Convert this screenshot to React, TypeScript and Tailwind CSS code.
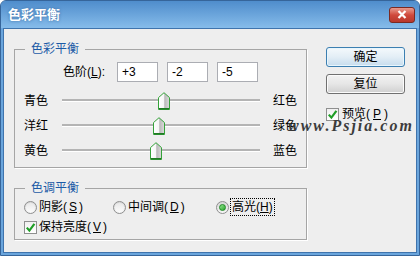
import React from 'react'

const sliders = [
  { left: '青色', right: '红色', value: 3 },
  { left: '洋红', right: '绿色', value: -2 },
  { left: '黄色', right: '蓝色', value: -5 },
]

const Thumb = () => (
  <svg width="12" height="18" viewBox="0 0 12 18">
    <defs>
      <linearGradient id="thumbFill" x1="0" x2="1" y1="0" y2="0">
        <stop offset="0" stopColor="#ffffff" />
        <stop offset="0.5" stopColor="#f6f6f6" />
        <stop offset="0.56" stopColor="#b9b9b9" />
        <stop offset="1" stopColor="#dcdcdc" />
      </linearGradient>
    </defs>
    <path d="M6 0.7 L11.5 5.6 V17.5 H0.5 V5.6 Z" fill="url(#thumbFill)" stroke="#35a23a" strokeWidth="1" />
    <path d="M1 16.8 H11" stroke="#1f7a22" strokeWidth="1.4" />
  </svg>
)

const Check = () => (
  <span className="flex h-[13px] w-[13px] items-center justify-center border border-[#8e8f8f] bg-linear-to-b from-[#f0f0f0] to-white">
    <svg width="11" height="11" viewBox="0 0 11 11">
      <path d="M1.8 5.6 L4.4 8.6 L9.4 1.8" fill="none" stroke="#1f9e26" strokeWidth="2.2" />
    </svg>
  </span>
)

const Radio = ({ checked }: { checked?: boolean }) => (
  <span className="flex h-[13px] w-[13px] items-center justify-center rounded-full border border-[#8e8f8f] bg-linear-to-b from-[#d6d6d6] to-[#f7f7f7]">
    {checked ? (
      <span className="h-[7px] w-[7px] rounded-full border border-[#1d8a22] bg-linear-to-br from-[#8ee58c] to-[#24a52b]" />
    ) : (
      <span className="h-[9px] w-[9px] rounded-full bg-linear-to-b from-[#e8e8e8] to-[#fbfbfb]" />
    )}
  </span>
)

const Key = ({ k }: { k: string }) => (
  <>
    (<u className="underline-offset-1">{k}</u>)
  </>
)

export default function App() {
  return (
    <div className="flex h-[256px] w-[420px] flex-col overflow-hidden rounded-t-[6px] border border-[#36659a] bg-[#6aa5dc] font-['Liberation_Sans','Noto_Sans_CJK_SC',sans-serif] text-[12px] leading-4 text-black">
      {/* title bar */}
      <div className="flex h-[27px] shrink-0 items-center justify-between bg-linear-to-b from-[#4f8dcc] to-[#86bcea] pl-[7px] pr-[4px]">
        <span className="text-[13px] font-bold text-white [text-shadow:0_0_3px_#3a6da3]">色彩平衡</span>
        <span className="flex h-[16px] w-[26px] items-center justify-center rounded-[3px] border border-[#7b2a22] bg-linear-to-b from-[#e79a8e] via-[#d0493c] to-[#b8382c]">
          <svg width="10" height="9" viewBox="0 0 10 9">
            <path d="M1.5 1 L8.5 8 M8.5 1 L1.5 8" stroke="#fff" strokeWidth="2.2" />
          </svg>
        </span>
      </div>

      {/* body */}
      <div className="relative mx-[2px] mb-[2px] flex flex-1 gap-[19px] border border-[#3f74ad] bg-[#eeeeee] pl-[10px] pt-[12px]">
        <div className="flex flex-col gap-[12px]">
          <fieldset className="w-[293px] border border-[#a5a5a5] pb-[4px] pl-[9px] pt-[5px] shadow-[1px_1px_0_#fff]">
            <legend className="ml-px px-[6px] text-[#1b5aa6]">色彩平衡</legend>
            <div className="flex h-[20px] items-center gap-[9px] pl-[39px]">
              <span className="w-[45px] whitespace-nowrap">色阶<Key k="L" />:</span>
              {['+3', '-2', '-5'].map(v => (
                <div key={v} className="flex h-[20px] w-[41px] items-center border border-[#abadb3] bg-white pl-[4px]">{v}</div>
              ))}
            </div>
            <div className="mt-[6px] flex flex-col">
              {sliders.map(s => (
                <div key={s.left} className="grid h-[25px] grid-cols-[38px_198px_1fr] items-center">
                  <span>{s.left}</span>
                  <div className="relative flex h-full items-center">
                    <div className="-mt-[2px] h-[2px] w-full bg-[#b4b4b4] shadow-[0_1px_0_#fff]" />
                    <span className="absolute top-[4px]" style={{ left: ((s.value + 100) / 200) * 198 - 6 }}>
                      <Thumb />
                    </span>
                  </div>
                  <span className="pl-[13px]">{s.right}</span>
                </div>
              ))}
            </div>
          </fieldset>

          <fieldset className="w-[293px] border border-[#a5a5a5] pb-[2px] pl-[9px] pt-px shadow-[1px_1px_0_#fff]">
            <legend className="ml-px px-[6px] text-[#1b5aa6]">色调平衡</legend>
            <div className="flex h-[20px] items-center">
              <label className="flex w-[89px] items-center gap-[2px]"><Radio />阴影<Key k="S" /></label>
              <label className="flex w-[103px] items-center gap-[2px]"><Radio />中间调<Key k="D" /></label>
              <label className="flex items-center gap-[1px]"><Radio checked /><span className="border border-dotted border-black px-px">高光<Key k="H" /></span></label>
            </div>
            <label className="flex h-[20px] items-center gap-[2px]"><Check />保持亮度<Key k="V" /></label>
          </fieldset>
        </div>

        <div className="flex flex-col pt-[6px]">
          <button className="h-[20px] w-[79px] rounded-[3px] border border-[#3c7fb1] bg-linear-to-b from-[#f4f9fc] via-[#e3eef6] to-[#c6dced] shadow-[inset_0_0_0_1px_#e8f6fd]">确定</button>
          <button className="mt-[7px] h-[20px] w-[79px] rounded-[3px] border border-[#707070] bg-linear-to-b from-[#f2f2f2] via-[#e6e6e6] to-[#cfcfcf] shadow-[inset_0_0_0_1px_#fbfbfb]">复位</button>
          <label className="mt-[10px] flex h-[20px] items-center gap-[3px]"><Check />预览<Key k="P" /></label>
        </div>

        <span className="absolute left-[284px] top-[91px] font-['Liberation_Serif',serif] text-[16px] font-bold italic leading-[12px] tracking-[2px] text-[#3c3c3c]">www.Psjia.com</span>
      </div>
    </div>
  )
}
